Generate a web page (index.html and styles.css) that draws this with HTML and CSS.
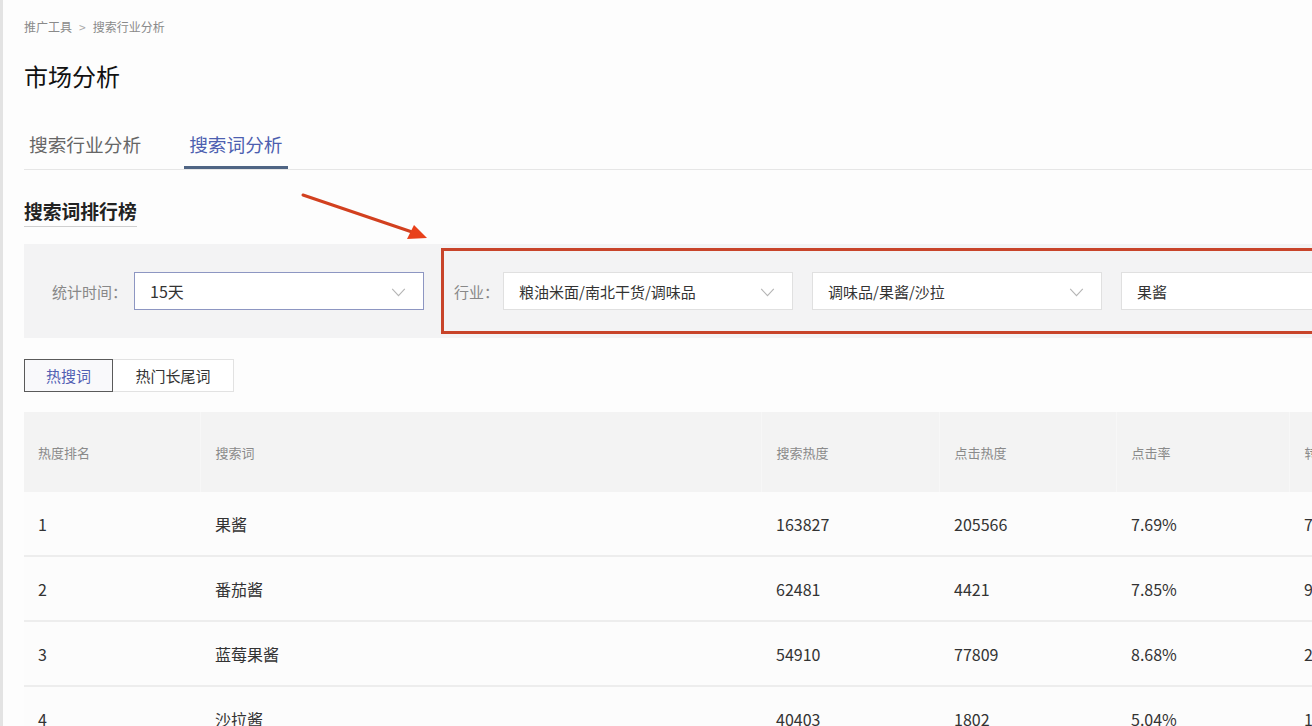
FILE: index.html
```html
<!DOCTYPE html>
<html lang="zh">
<head>
<meta charset="utf-8">
<title>市场分析</title>
<link rel="stylesheet" href="styles.css">
</head>
<body>
<div class="page">
  <div class="breadcrumb"><span>推广工具</span><span class="sep">&gt;</span><span>搜索行业分析</span></div>
  <h1 class="title">市场分析</h1>
  <div class="tabs">
    <div class="tab">搜索行业分析</div>
    <div class="tab active">搜索词分析</div>
  </div>
  <div class="section-title"><span>搜索词排行榜</span></div>

  <div class="filter">
    <div class="filter-time">
      <span class="label">统计时间：</span>
      <div class="select select-blue"><span>15天</span><svg class="chev" viewBox="0 0 16 10"><path d="M1 1 L8 8.5 L15 1" fill="none" stroke="#b5b5b5" stroke-width="1.2"/></svg></div>
    </div>
    <div class="filter-industry">
      <span class="label">行业：</span>
      <div class="select"><span>粮油米面/南北干货/调味品</span><svg class="chev" viewBox="0 0 16 10"><path d="M1 1 L8 8.5 L15 1" fill="none" stroke="#b5b5b5" stroke-width="1.2"/></svg></div>
      <div class="select"><span>调味品/果酱/沙拉</span><svg class="chev" viewBox="0 0 16 10"><path d="M1 1 L8 8.5 L15 1" fill="none" stroke="#b5b5b5" stroke-width="1.2"/></svg></div>
      <div class="select"><span>果酱</span></div>
    </div>
  </div>

  <div class="toggle">
    <div class="tbtn active">热搜词</div>
    <div class="tbtn">热门长尾词</div>
  </div>

  <table class="rank">
    <colgroup>
      <col class="c1"><col class="c2"><col class="c3"><col class="c4"><col class="c5"><col class="c6">
    </colgroup>
    <thead>
      <tr><th>热度排名</th><th>搜索词</th><th>搜索热度</th><th>点击热度</th><th>点击率</th><th>转化率</th></tr>
    </thead>
    <tbody>
      <tr><td>1</td><td>果酱</td><td>163827</td><td>205566</td><td>7.69%</td><td>7.12%</td></tr>
      <tr><td>2</td><td>番茄酱</td><td>62481</td><td>4421</td><td>7.85%</td><td>9.21%</td></tr>
      <tr><td>3</td><td>蓝莓果酱</td><td>54910</td><td>77809</td><td>8.68%</td><td>2.35%</td></tr>
      <tr><td>4</td><td>沙拉酱</td><td>40403</td><td>1802</td><td>5.04%</td><td>1.87%</td></tr>
    </tbody>
  </table>

  <svg class="arrow" width="140" height="60" viewBox="0 0 140 60">
    <line x1="4" y1="4" x2="116" y2="42" stroke="#d2401f" stroke-width="3" stroke-linecap="round"/>
    <polygon points="128,47 108,48 115,34" fill="#e8401a"/>
  </svg>
</div>
</body>
</html>
```

FILE: styles.css
```css
html, body {
  margin: 0;
  padding: 0;
  background: #fdfdfd;
  overflow: hidden;
}
body {
  font-family: "Noto Sans CJK SC", "Noto Sans", sans-serif;
  color: #333;
  width: 1312px;
  height: 726px;
}
.page {
  position: relative;
  height: 726px;
  border-left: 3px solid #e3e3e3;
  padding-left: 21px;
  box-sizing: border-box;
  overflow: hidden;
}
.breadcrumb {
  padding-top: 18px;
  height: 18px;
  line-height: 18px;
  font-size: 12px;
  color: #8a8a8a;
}
.breadcrumb .sep {
  margin: 0 7px;
  color: #aaa;
}
.title {
  margin: 0;
  margin-top: 23px;
  font-size: 24px;
  font-weight: 400;
  line-height: 34px;
  color: #111;
}
.tabs {
  display: flex;
  margin-top: 32px;
  border-bottom: 1px solid #e6e6e6;
  height: 44px;
}
.tab {
  padding: 0 5px;
  font-size: 18.7px;
  line-height: 38px;
  color: #666;
  margin-right: 38px;
}
.tab.active {
  color: #4d5fb0;
  border-bottom: 3px solid #4f6584;
  height: 41px;
}
.section-title {
  margin-top: 26px;
  height: 32px;
}
.section-title span {
  display: inline-block;
  font-size: 18.8px;
  font-weight: 700;
  line-height: 30px;
  color: #222;
  border-bottom: 1px solid #cfcfcf;
}
.filter {
  margin-top: 16px;
  display: flex;
  align-items: center;
  background: #f3f3f4;
  height: 94px;
  width: 1400px;
}
.filter-time {
  display: flex;
  align-items: center;
  padding-left: 28px;
  width: 389px;
  flex: none;
}
.filter-time .label {
  width: 82px;
  flex: none;
}
.label {
  font-size: 15px;
  color: #888;
  white-space: nowrap;
}
.select {
  position: relative;
  flex: none;
  width: 290px;
  height: 38px;
  box-sizing: border-box;
  border: 1px solid #e0e0e0;
  background: #fff;
  display: flex;
  align-items: center;
  padding-left: 15px;
  font-size: 15px;
  color: #333;
}
.select-blue {
  border-color: #8d96c2;
}
.select-blue span {
  font-size: 16px;
}
.chev {
  position: absolute;
  right: 17px;
  top: 15px;
  width: 15px;
  height: 9px;
}
.filter-industry {
  flex: none;
  height: 86px;
  box-sizing: border-box;
  border: 3px solid #c8442a;
  display: flex;
  align-items: center;
  padding-left: 10px;
  width: 1000px;
}
.filter-industry .label {
  margin-right: 4px;
}
.filter-industry .select {
  margin-right: 19px;
}
.toggle {
  display: flex;
  margin-top: 21px;
}
.tbtn {
  height: 33px;
  box-sizing: border-box;
  border: 1px solid #e2e2e2;
  background: #fff;
  font-size: 15px;
  line-height: 31px;
  text-align: center;
  color: #333;
}
.tbtn.active {
  width: 89px;
  border-color: #5a5a5a;
  color: #5260b3;
  background: #f9f9fb;
}
.tbtn:not(.active) {
  width: 121px;
  border-left: none;
}
.rank {
  margin-top: 20px;
  border-collapse: collapse;
  table-layout: fixed;
  width: 1466px;
}
.c1 { width: 176px; }
.c2 { width: 561px; }
.c3 { width: 178px; }
.c4 { width: 177px; }
.c5 { width: 173px; }
.c6 { width: 201px; }
.rank th {
  height: 80px;
  background: #f3f3f3;
  font-size: 13px;
  font-weight: 400;
  color: #8a8a8a;
  text-align: left;
  padding: 0 0 0 15px;
  border-left: 1px solid #f7f7f7;
}
.rank th:first-child {
  border-left: none;
  padding-left: 14px;
}
.rank td {
  height: 63px;
  padding: 0 0 0 15px;
  font-size: 16px;
  color: #333;
  background: #fcfcfc;
  border-bottom: 2px solid #ededed;
}
.rank td:first-child {
  padding-left: 14px;
}
.arrow {
  position: absolute;
  left: 296px;
  top: 191px;
}
```
